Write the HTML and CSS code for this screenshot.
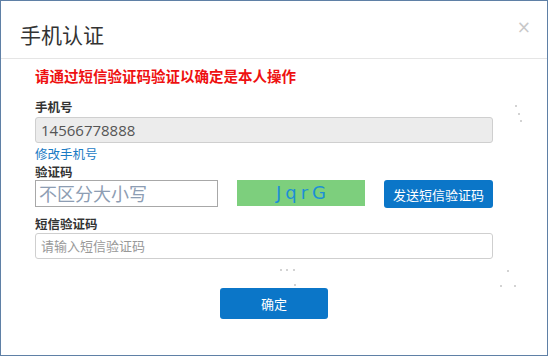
FILE: index.html
```html
<!DOCTYPE html>
<html lang="zh-CN">
<head>
  <meta charset="UTF-8">
  <title>手机认证</title>
  <link rel="stylesheet" href="styles.css">
</head>
<body>
  <div class="dialog">
    <div class="dialog-header">
      <h1>手机认证</h1>
      <span class="close">×</span>
    </div>

    <div class="dialog-body">
      <p class="notice">请通过短信验证码验证以确定是本人操作</p>

      <label class="field-label">手机号</label>
      <input type="text" class="input input-readonly" value="14566778888" readonly>
      <a class="change-link" href="#">修改手机号</a>

      <label class="field-label label-code">验证码</label>
      <div class="captcha-row">
        <input type="text" class="input captcha-input" placeholder="不区分大小写">
        <div class="captcha-img">JqrG</div>
        <button class="btn send-btn">发送短信验证码</button>
      </div>

      <label class="field-label label-sms">短信验证码</label>
      <input type="text" class="input sms-input" placeholder="请输入短信验证码">

      <div class="actions">
        <button class="btn confirm-btn">确定</button>
      </div>
    </div>

    <span class="dot" style="left:514px;top:104px"></span>
    <span class="dot" style="left:517px;top:112px"></span>
    <span class="dot" style="left:519px;top:119px"></span>
    <span class="dot" style="left:279px;top:268px"></span>
    <span class="dot" style="left:285px;top:268px"></span>
    <span class="dot" style="left:292px;top:268px"></span>
    <span class="dot" style="left:293px;top:283px"></span>
    <span class="dot" style="left:506px;top:269px"></span>
    <span class="dot" style="left:499px;top:284px"></span>
    <span class="dot" style="left:513px;top:284px"></span>
  </div>
</body>
</html>
```

FILE: styles.css
```css
body {
  margin: 0;
  font-family: "Noto Sans CJK SC", "Open Sans", sans-serif;
  background: #fff;
}

.dialog {
  position: relative;
  width: 548px;
  height: 356px;
  box-sizing: border-box;
  border: 1px solid #5f80a6;
  background: #fff;
}

.dialog-header {
  height: 58px;
  padding: 9px 16px 0 19px;
  box-sizing: border-box;
  border-bottom: 1px solid #e5e5e5;
  display: flex;
  align-items: center;
  justify-content: space-between;
}

.dialog-header h1 {
  margin: 0;
  font-size: 21px;
  font-weight: normal;
  line-height: 24px;
  color: #333;
}

.close {
  font-family: "DejaVu Sans", sans-serif;
  font-size: 17px;
  line-height: 20px;
  color: #c8c8c8;
  margin-top: -14px;
}

.dialog-body {
  padding: 0 54px 0 34px;
}

.notice {
  margin: 7px 0 0;
  font-size: 14.5px;
  line-height: 20px;
  font-weight: bold;
  color: #ee1111;
}

.field-label {
  display: block;
  margin-top: 13px;
  font-size: 12.5px;
  line-height: 16px;
  font-weight: bold;
  color: #333;
}

.input {
  display: block;
  width: 100%;
  height: 26px;
  margin-top: 2px;
  padding: 0 5px;
  box-sizing: border-box;
  border: 1px solid #cfcfcf;
  border-radius: 3px;
  font-family: "Open Sans", "Noto Sans CJK SC", sans-serif;
  font-size: 13px;
  color: #555;
  background: #fff;
  outline: none;
}

.input::placeholder {
  color: #999;
}

.input-readonly {
  background: #ececec;
  font-size: 15px;
  color: #555;
}

.change-link {
  display: block;
  margin-top: 3px;
  font-size: 12.5px;
  line-height: 16px;
  color: #1a7bc4;
  text-decoration: none;
}

.label-code {
  margin-top: 2px;
}

.captcha-row {
  display: flex;
  align-items: flex-start;
  margin-top: 0;
}

.captcha-input {
  width: 183px;
  height: 27px;
  margin-top: 0;
  padding: 0 3px;
  border: 1px solid #a8a8a8;
  border-radius: 0;
  font-size: 18px;
}

.captcha-input::placeholder {
  color: #8d9db3;
}

.captcha-img {
  width: 128px;
  height: 26px;
  margin-left: 19px;
  background: #7dcf7d;
  color: #1c8fd6;
  font-family: "DejaVu Sans", sans-serif;
  font-size: 18px;
  line-height: 26px;
  letter-spacing: 4px;
  text-align: center;
  padding-left: 4px;
  box-sizing: border-box;
}

.btn {
  border: none;
  border-radius: 3px;
  background: #0b76c8;
  color: #fff;
  font-family: "Noto Sans CJK SC", sans-serif;
  font-size: 13px;
  cursor: pointer;
}

.send-btn {
  width: 109px;
  height: 28px;
  margin-left: 19px;
  padding: 0;
}

.label-sms {
  margin-top: 8px;
}

.sms-input {
  margin-top: 1px;
  font-size: 13px;
}

.actions {
  display: flex;
  justify-content: center;
  margin-top: 29px;
  margin-right: -20px;
}

.confirm-btn {
  width: 108px;
  height: 31px;
}

.dot {
  position: absolute;
  width: 2px;
  height: 2px;
  border-radius: 50%;
  background: #c4c4c4;
}
```
